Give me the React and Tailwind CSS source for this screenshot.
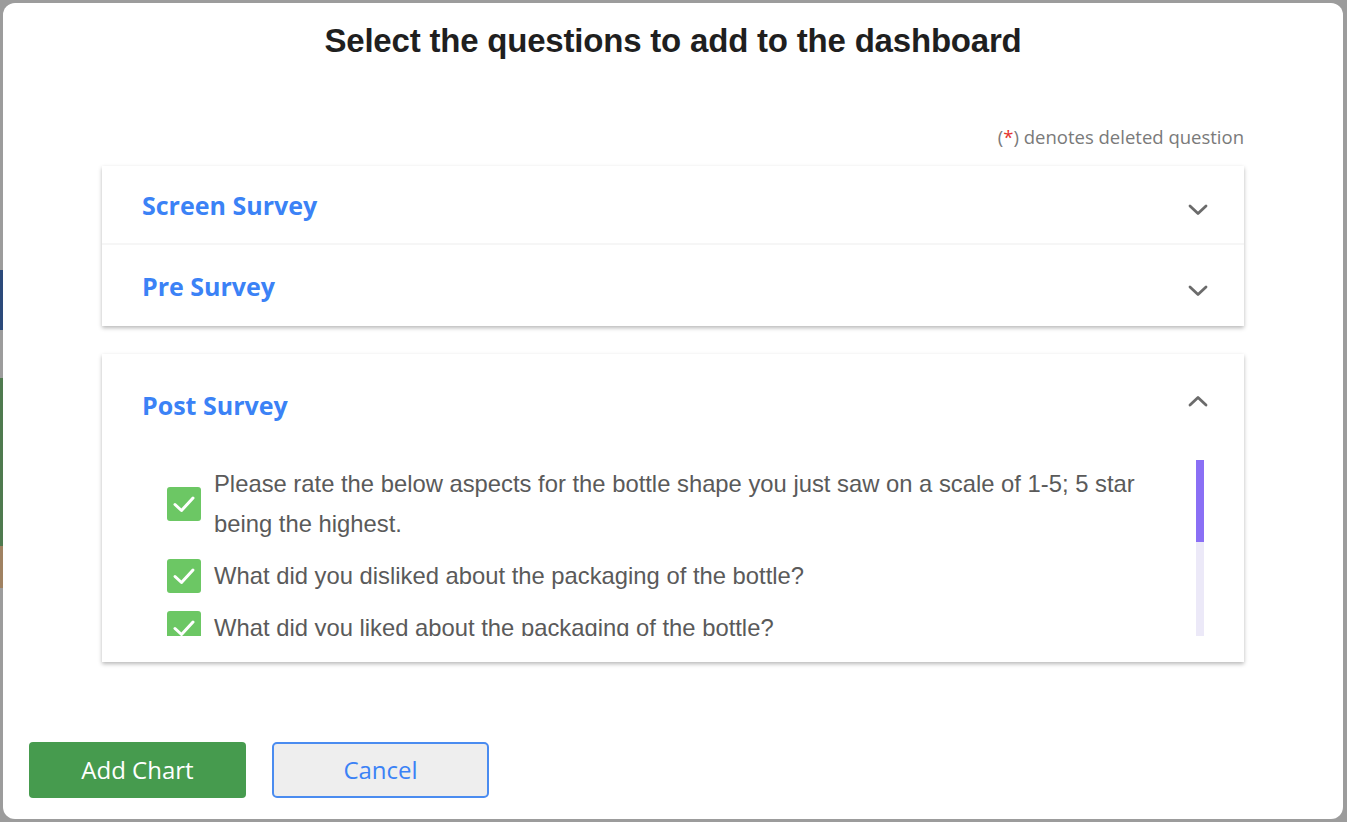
import React, { useState } from 'react';

const questions = [
  'Please rate the below aspects for the bottle shape you just saw on a scale of 1-5; 5 star being the highest.',
  'What did you disliked about the packaging of the bottle?',
  'What did you liked about the packaging of the bottle?',
  'Which bottle shape did you prefer the most?',
];

const Chevron = ({ up }) => (
  <svg width="20" height="12" viewBox="0 0 20 12" className={up ? 'text-[#6b6b6b] mb-[8px]' : 'text-[#6b6b6b] mt-[10px]'}>
    <path
      d={up ? 'M2 10 L10 2.5 L18 10' : 'M2 2 L10 9.5 L18 2'}
      fill="none"
      stroke="currentColor"
      strokeWidth="2.8"
      strokeLinecap="round"
      strokeLinejoin="round"
    />
  </svg>
);

const CheckBox = () => (
  <span className="shrink-0 w-[34px] h-[34px] rounded-[3px] bg-[#6cc764] flex items-center justify-center">
    <svg width="24" height="20" viewBox="0 0 24 20">
      <path d="M3 10.5 L9.5 16.5 L21 4" fill="none" stroke="white" strokeWidth="3" strokeLinecap="round" strokeLinejoin="round" />
    </svg>
  </span>
);

const PanelHeader = ({ title, open }) => (
  <div className="flex items-center justify-between pl-[40px] pr-[36px]">
    <span className="text-[25px] leading-[34px] font-bold text-[#3b82f6] font-['Open_Sans',sans-serif]">{title}</span>
    <Chevron up={open} />
  </div>
);

export default function App() {
  const [checked] = useState(questions.map(() => true));

  return (
    <div className="h-[822px] bg-[#9c9c9c] flex">
      <div className="w-[3px] flex flex-col">
        <div className="h-[270px]" />
        <div className="h-[60px] bg-[#2c4a7a]" />
        <div className="h-[48px]" />
        <div className="h-[168px] bg-[#4f7a4f]" />
        <div className="h-[42px] bg-[#a08262]" />
      </div>
      <div className="flex-1 my-[3px] mr-[4px] bg-white rounded-[12px] flex flex-col">
        <h1 className="pt-[19px] text-center text-[33px] leading-[38px] font-bold text-[#1f1f1f] font-['Liberation_Sans',Arial,sans-serif] tracking-[-0.2px]">
          Select the questions to add to the dashboard
        </h1>

        <div className="px-[99px] flex flex-col">
          <p className="mt-[65px] text-right text-[18.5px] leading-[24px] text-[#7a7a7a] font-['Open_Sans',sans-serif]">
            (<span className="text-[#e5322d]">*</span>) denotes deleted question
          </p>

          <div className="mt-[17px] bg-white shadow-[0_2px_4px_rgba(0,0,0,0.28)]">
            <div className="h-[77px] flex flex-col justify-center">
              <PanelHeader title="Screen Survey" />
            </div>
            <div className="h-[2px] bg-[#f6f6f6]" />
            <div className="h-[81px] flex flex-col justify-center">
              <PanelHeader title="Pre Survey" />
            </div>
          </div>

          <div className="mt-[28px] bg-white shadow-[0_2px_4px_rgba(0,0,0,0.28)] pt-[34px] pb-[26px]">
            <PanelHeader title="Post Survey" open />
            <div className="mt-[38px] flex pl-[65px] pr-[40px]">
              <div className="flex-1 h-[176px] overflow-hidden pt-[4px] pr-[40px]">
                {questions.map((q, i) => (
                  <div key={i} className="flex gap-[13px] mb-[12px] items-center">
                    {checked[i] && <CheckBox />}
                    <span className="text-[23.8px] leading-[40px] text-[#5a5a5a] font-['Liberation_Sans',Arial,sans-serif]">
                      {q}
                    </span>
                  </div>
                ))}
              </div>
              <div className="w-[8px] h-[176px] bg-[#ece9f8] flex flex-col">
                <div className="h-[82px] bg-[#8a6ff5]" />
              </div>
            </div>
          </div>
        </div>

        <div className="mt-auto mb-[21px] px-[26px] flex gap-[26px] font-['Open_Sans',sans-serif]">
          <button className="w-[217px] h-[56px] rounded-[4px] bg-[#469b4e] text-white text-[24px]">
            Add Chart
          </button>
          <button className="w-[217px] h-[56px] rounded-[5px] bg-[#eeeeee] border-2 border-[#4a8cf0] text-[#3b82f6] text-[24px]">
            Cancel
          </button>
        </div>
      </div>
    </div>
  );
}
